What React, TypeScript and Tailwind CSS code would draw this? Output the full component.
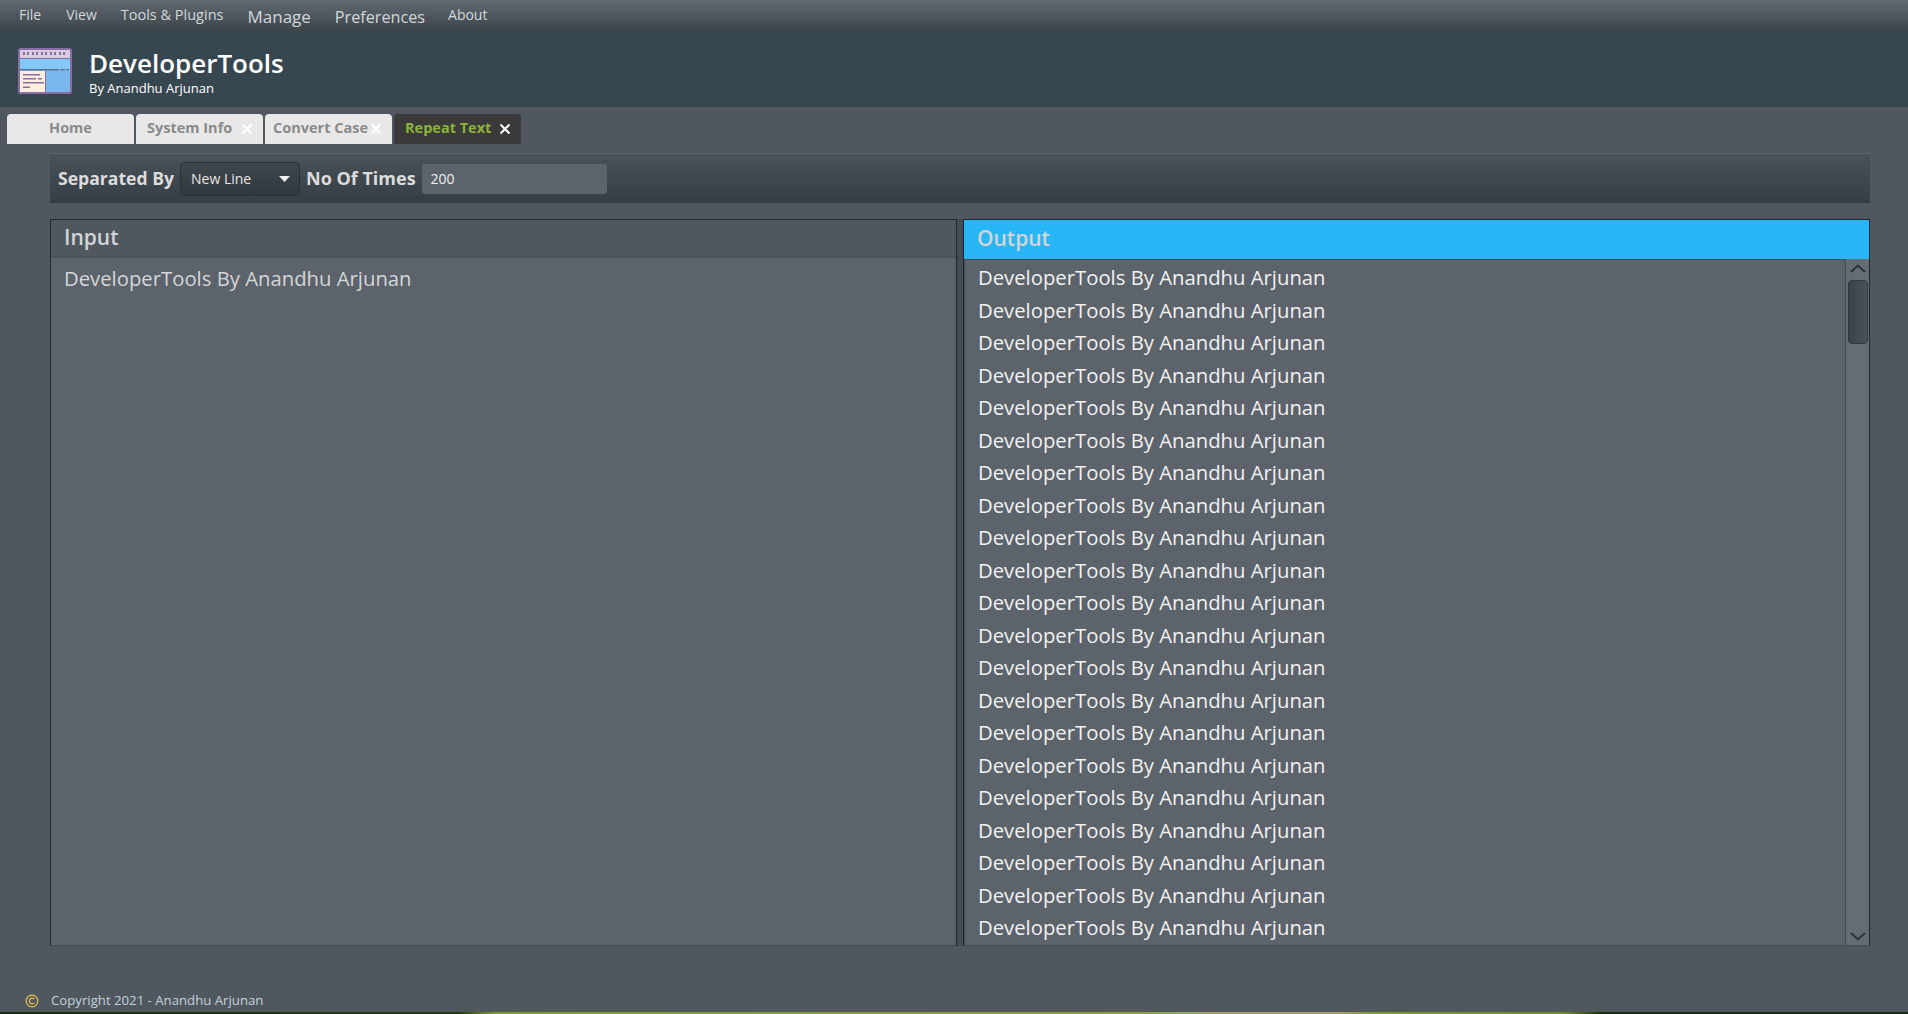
const font = "font-['Open_Sans','Noto_Sans',sans-serif]";

const tabs = [
  { label: "Home", closable: false, pad: "justify-center" },
  { label: "System Info", closable: true, pad: "pl-[11px]" },
  { label: "Convert Case", closable: true, pad: "pl-[8px]" },
];

function AppIcon() {
  return (
    <svg width="54" height="46" viewBox="0 0 54 46" className="mt-[2px] shrink-0">
      <rect x="1" y="1" width="52" height="44" rx="1.5" fill="#82c8f8" stroke="#8a6da3" strokeWidth="2" />
      <rect x="2" y="2" width="50" height="8" fill="#d6cde0" />
      {[5, 9, 14, 18, 23, 27, 32, 36, 41, 45].map((x) => (
        <rect key={x} x={x} y="4" width="2" height="3" fill="#8a6da3" />
      ))}
      <rect x="2" y="10" width="50" height="1" fill="#8a6da3" />
      <rect x="28" y="23" width="24" height="21" fill="#78b8ec" />
      <rect x="2" y="21" width="39" height="1.5" fill="#5f6f8f" />
      <rect x="42" y="21" width="5" height="1.5" fill="#5f6f8f" />
      <rect x="48" y="21" width="3" height="1.5" fill="#5f6f8f" />
      <rect x="2" y="23" width="25" height="21" fill="#fdeedd" />
      <rect x="27" y="23" width="1" height="21" fill="#8a6da3" />
      <rect x="5" y="26" width="17" height="1.5" fill="#8a6da3" />
      <rect x="5" y="30" width="13" height="1.5" fill="#8a6da3" />
      <rect x="20" y="30" width="4" height="1.5" fill="#8a6da3" />
      <rect x="5" y="34" width="21" height="1.5" fill="#8a6da3" />
      <rect x="5" y="38.5" width="7" height="1.5" fill="#8a6da3" />
    </svg>
  );
}

function CloseMark({ className }: { className: string }) {
  return (
    <svg width="12" height="12" viewBox="0 0 12 12" className={className}>
      <path d="M1.5 1.5l9 9M10.5 1.5l-9 9" stroke="currentColor" strokeWidth="2" fill="none" />
    </svg>
  );
}

export default function App() {
  return (
    <div className={`${font} flex h-[1014px] w-[1908px] flex-col overflow-hidden bg-[#50575f]`}>
      {/* menu bar */}
      <div className="flex h-[33px] shrink-0 items-start bg-gradient-to-b from-[#626970] to-[#3b4248] pl-[19px] text-[#d3d8da]">
        <span className="mt-[5px] text-[14px] leading-[20px]">File</span>
        <span className="ml-[25px] mt-[5px] text-[14px] leading-[20px]">View</span>
        <span className="ml-[24px] mt-[5px] text-[14.5px] leading-[20px]">Tools &amp; Plugins</span>
        <span className="ml-[24px] mt-[5px] text-[17px] leading-[24px]">Manage</span>
        <span className="ml-[24px] mt-[5px] text-[16.2px] leading-[24px]">Preferences</span>
        <span className="ml-[23px] mt-[5px] text-[14px] leading-[20px]">About</span>
      </div>

      {/* title */}
      <div className="flex h-[74px] shrink-0 items-center bg-[#37474f] pl-[18px]">
        <AppIcon />
        <div className="ml-[17px] mt-[2px] text-white">
          <div className="text-[26px] font-semibold leading-[34px]">DeveloperTools</div>
          <div className="text-[13px] leading-[17px]">By Anandhu Arjunan</div>
        </div>
      </div>

      {/* tabs */}
      <div className="mt-[7px] flex h-[30px] shrink-0 gap-[2px] pl-[7px]">
        {tabs.map((t) => (
          <div
            key={t.label}
            className={`relative flex w-[127px] items-center rounded-t-[4px] bg-[#e8e8e8] pb-[2px] text-[14.5px] font-bold text-[#8a8a8a] ${t.pad}`}
          >
            {t.label}
            {t.closable && <CloseMark className="absolute right-[10px] top-[9px] text-white" />}
          </div>
        ))}
        <div className="relative flex w-[127px] items-center rounded-t-[4px] bg-[#3a3a3a] pb-[2px] pl-[11px] text-[14.5px] font-bold text-[#8db33c]">
          Repeat Text
          <CloseMark className="absolute right-[10px] top-[9px] text-white" />
        </div>
      </div>

      {/* main */}
      <div className="ml-[50px] mr-[38px] mt-[9px] flex min-h-0 flex-col">
        <div className="flex h-[50px] shrink-0 items-center border-t border-[#5c636a] bg-gradient-to-b from-[#4a5259] to-[#363e44] pl-[8px]">
          <span className="w-[116px] whitespace-nowrap text-[17.6px] font-bold text-[#dcdcdc]">Separated By</span>
          <div className="ml-[6px] flex h-[34px] w-[120px] items-center justify-between rounded-[4px] border border-[#2b3136] bg-gradient-to-b from-[#3f474d] to-[#31383d] pl-[10px] pr-[9px] text-[14px] text-[#e6e6e6]">
            New Line
            <svg width="11" height="6" viewBox="0 0 11 6"><path d="M0 0h11L5.5 6z" fill="#f0f0f0" /></svg>
          </div>
          <span className="ml-[6px] whitespace-nowrap text-[18px] font-bold text-[#dcdcdc]">No Of Times</span>
          <div className="ml-[6px] flex h-[30px] w-[185px] items-center rounded-[3px] bg-[#5c636a] pl-[9px] text-[14px] text-[#f0f0f0]">200</div>
        </div>

        <div className="mt-[16px] flex h-[727px]">
          {/* input pane */}
          <div className="flex w-[907px] flex-col border border-b-[#43494f] border-l-[#20262b] border-r-[#20262b] border-t-[#20262b] bg-[#5c636a]">
            <div className="flex h-[38px] shrink-0 items-center border-b-2 border-[#4b5259] bg-[#50575f] pl-[13px] text-[21px] font-semibold text-[#d2d4d6]">Input</div>
            <div className="pl-[13px] pt-[4px] text-[20.3px] leading-[32px] text-[#d4d6d8]">DeveloperTools By Anandhu Arjunan</div>
          </div>
          {/* splitter */}
          <div className="w-[7px] shrink-0 border-r border-[#20262b] bg-[#454c53]" />
          {/* output pane */}
          <div className="flex min-w-0 flex-1 flex-col border-r border-t border-[#20262b]">
            <div className="flex h-[39px] shrink-0 items-center bg-[#29b6f6] pb-[1px] pl-[13px] text-[21px] font-semibold text-[#d2d4d6]">Output</div>
            <div className="flex min-h-0 flex-1 border-b border-[#454c53]">
              <div className="min-w-0 flex-1 overflow-hidden border-l border-t border-[#454c53] bg-[#5c636a] pl-[13px] pt-[1px]">
                {Array.from({ length: 21 }, (_, i) => (
                  <div key={i} className="h-[32.5px] text-[20.3px] leading-[32.5px] text-[#f2f2f2]">DeveloperTools By Anandhu Arjunan</div>
                ))}
              </div>
              <div className="flex w-[24px] shrink-0 flex-col items-center border-l border-[#454c53] bg-[#656c73] pt-[5px]">
                <svg width="16" height="9" viewBox="0 0 16 9"><path d="M1 8l7-6.5L15 8" stroke="#2c3237" strokeWidth="2" fill="none" /></svg>
                <div className="mt-[7px] h-[64px] w-[20px] rounded-[4px] border border-[#33393e] bg-gradient-to-r from-[#3a4147] to-[#4b5258]" />
                <svg width="16" height="9" viewBox="0 0 16 9" className="mb-[4px] mt-auto"><path d="M1 1l7 6.5L15 1" stroke="#2c3237" strokeWidth="2" fill="none" /></svg>
              </div>
            </div>
          </div>
        </div>
      </div>

      {/* footer */}
      <div className="mt-auto flex h-[22px] shrink-0 items-center pl-[25px] text-[13.2px] text-[#c3d2dc]">
        <svg width="14" height="14" viewBox="0 0 14 14" className="shrink-0">
          <circle cx="7" cy="7" r="5.8" stroke="#e8c24a" strokeWidth="1.2" fill="none" />
          <path d="M9.3 5.2a2.8 2.8 0 1 0 0 3.6" stroke="#e8c24a" strokeWidth="1.2" fill="none" />
        </svg>
        <span className="ml-[12px]">Copyright 2021 - Anandhu Arjunan</span>
      </div>
      <div className="h-[2px] shrink-0 bg-[linear-gradient(to_right,#16300f_0%,#1f3a12_24%,#7f9a2a_26%,#8a9f3a_60%,#8ea86a_62%,#a89a6a_64%,#a89a6a_70%,#7f9a2a_72%,#6f8a22_82%,#16300f_84%,#16300f_100%)]" />
    </div>
  );
}
